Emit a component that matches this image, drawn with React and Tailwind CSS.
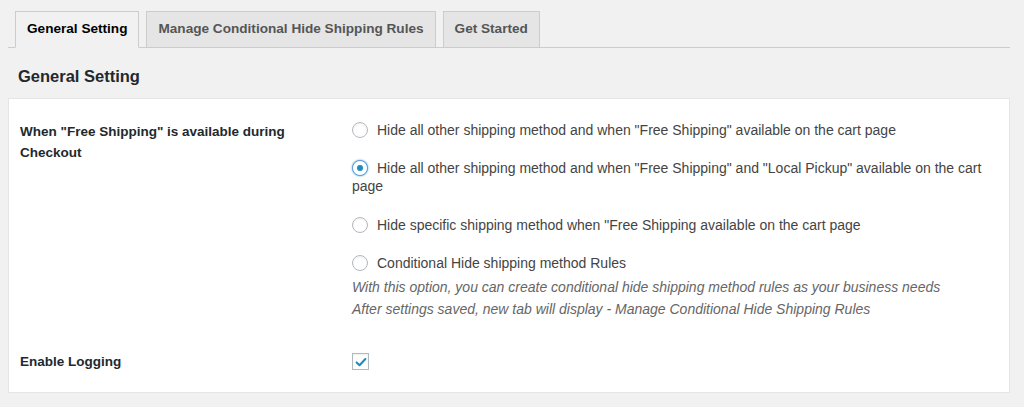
import React from 'react'

// Settings page: tabs, heading and a white form panel (WordPress admin look)

const TABS = [
  { label: 'General Setting', active: true },
  { label: 'Manage Conditional Hide Shipping Rules' },
  { label: 'Get Started' },
]

const OPTIONS = [
  { text: 'Hide all other shipping method and when "Free Shipping" available on the cart page', gap: 'mb-[20px]' },
  { text: 'Hide all other shipping method and when "Free Shipping" and "Local Pickup" available on the cart page', checked: true, gap: 'mb-[21px]' },
  { text: 'Hide specific shipping method when "Free Shipping available on the cart page', gap: 'mb-[20px]' },
  { text: 'Conditional Hide shipping method Rules', gap: '' },
]

function Radio({ checked }) {
  return (
    <span
      className={`relative inline-block w-[16px] h-[16px] mr-[9px] rounded-full border bg-white align-[-3px] ${
        checked ? 'border-[#5b9dd9] shadow-[0_0_2px_rgba(30,140,190,0.8)]' : 'border-[#b4b9be] shadow-[inset_0_1px_2px_rgba(0,0,0,0.07)]'
      }`}
    >
      {checked && (
        <span className="absolute left-1/2 top-1/2 -translate-x-1/2 -translate-y-1/2 w-[6px] h-[6px] rounded-full bg-[#1e8cbe]" />
      )}
    </span>
  )
}

function Checkbox() {
  return (
    <span className="inline-flex items-center justify-center w-[17px] h-[17px] border border-[#b4b9be] bg-white shadow-[inset_0_1px_2px_rgba(0,0,0,0.07)]">
      <svg viewBox="0 0 16 16" className="w-[14px] h-[14px]">
        <path d="M3 8.5 L6.3 11.6 L13 4.6" fill="none" stroke="#1e8cbe" strokeWidth="2.4" strokeLinecap="round" strokeLinejoin="round" />
      </svg>
    </span>
  )
}

export default function App() {
  return (
    <div className="min-h-[407px] bg-[#f1f1f1] pl-[8px] pr-[14px] pt-[11px] font-['Liberation_Sans',Arial,sans-serif] text-[#444]">
      {/* Tabs */}
      <nav className="flex gap-[7px] pl-[7px] border-b border-[#ccc]">
        {TABS.map(tab => (
          <div
            key={tab.label}
            className={`-mb-px h-[37px] px-[11px] flex items-center border text-[13.6px] font-bold ${
              tab.active
                ? 'bg-[#f1f1f1] border-[#ccc] border-b-[#f1f1f1] text-[#000]'
                : 'bg-[#e5e5e5] border-[#ccc] text-[#555]'
            }`}
          >
            {tab.label}
          </div>
        ))}
      </nav>

      <h2 className="mt-[17px] mb-[11px] pl-[10px] text-[16.5px] leading-[22px] font-bold text-[#23282d]">General Setting</h2>

      {/* Form panel */}
      <div className="bg-white border border-[#e5e5e5] px-[11px]">
        <div className="flex pt-[22px] pb-[11px]">
          <div className="w-[332px] shrink-0 pr-[20px] text-[13.5px] leading-[21px] font-bold text-[#23282d]">
            When "Free Shipping" is available during Checkout
          </div>
          <div className="flex-1 pr-[6px] text-[14px] leading-[18px]">
            {OPTIONS.map((opt, i) => (
              <div key={i} className={opt.gap}>
                <Radio checked={opt.checked} />
                {opt.text}
              </div>
            ))}
            <div className="mt-[4px] italic text-[#666] leading-[22px]">
              <div>With this option, you can create conditional hide shipping method rules as your business needs</div>
              <div>After settings saved, new tab will display - Manage Conditional Hide Shipping Rules</div>
            </div>
          </div>
        </div>

        <div className="flex items-center py-[20px]">
          <div className="w-[332px] shrink-0 text-[13.5px] leading-[21px] font-bold text-[#23282d]">Enable Logging</div>
          <Checkbox />
        </div>
      </div>
    </div>
  )
}
